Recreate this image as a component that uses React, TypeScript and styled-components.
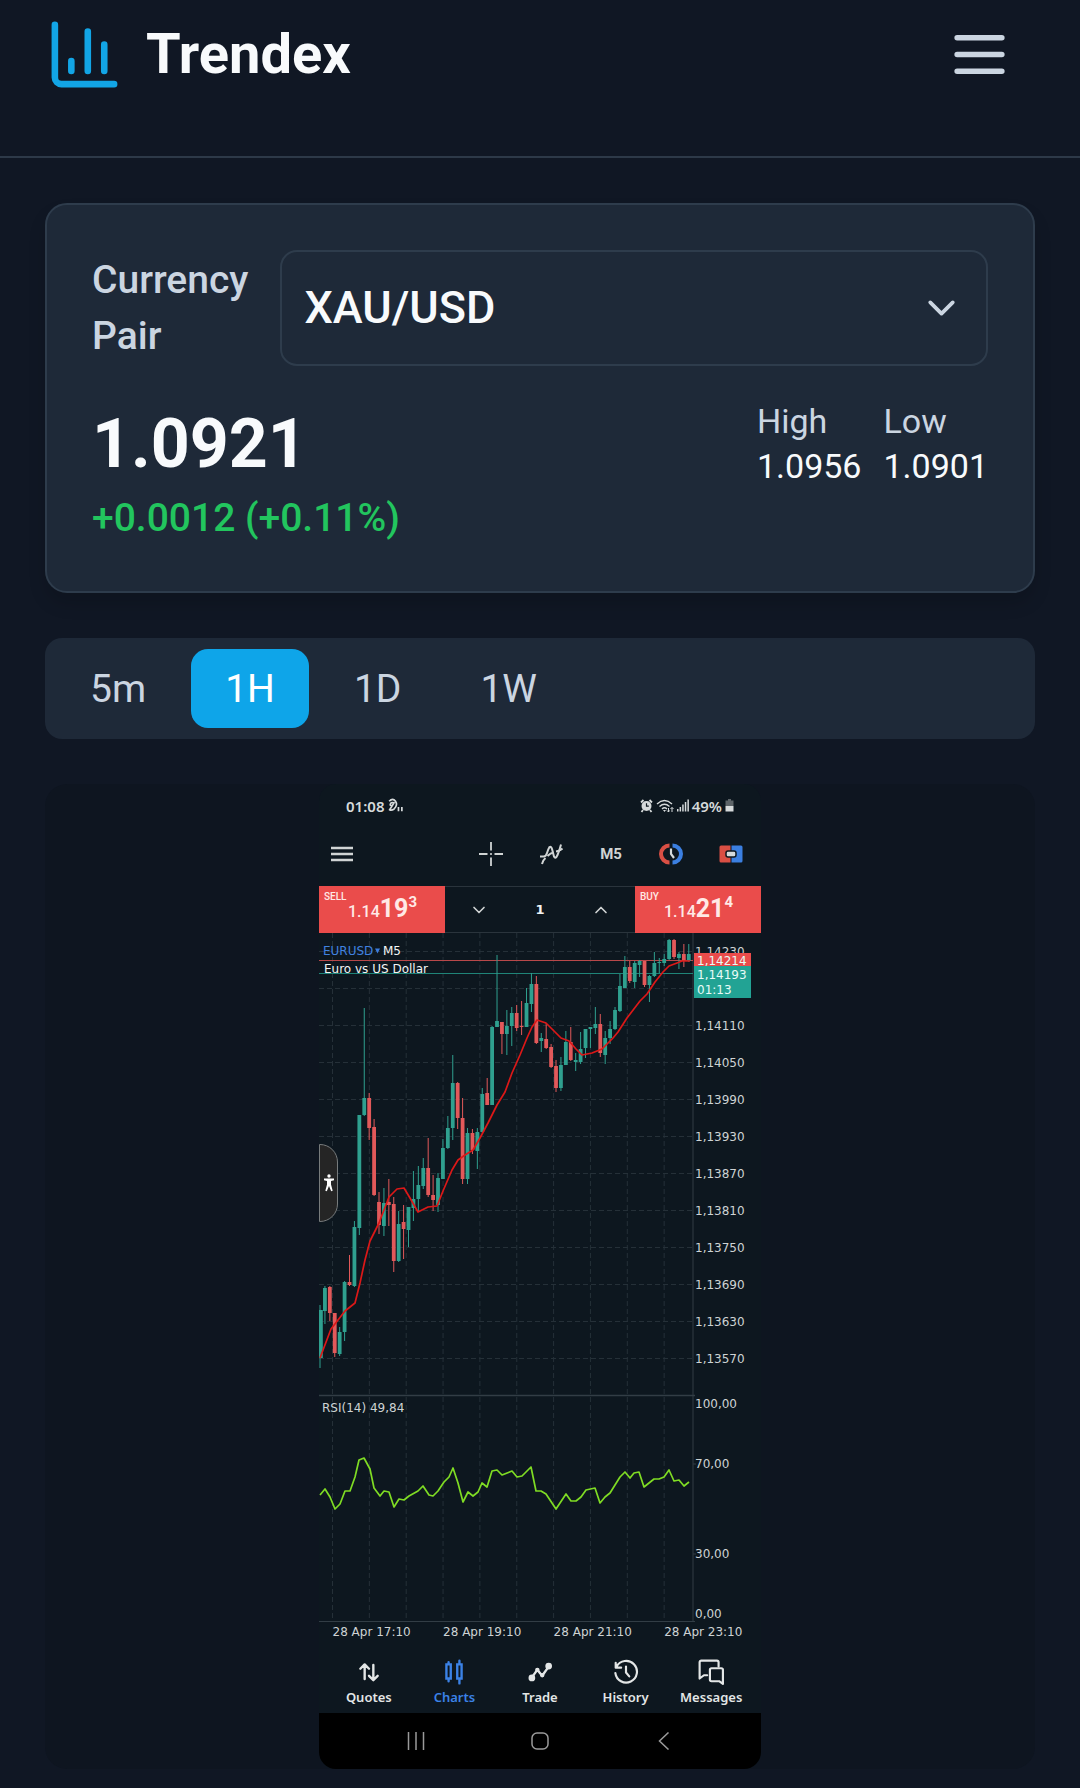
import React, { useState } from "react";
import styled, { createGlobalStyle } from "styled-components";

const GlobalStyle = createGlobalStyle`
  *, *::before, *::after { box-sizing: border-box; }
  body {
    margin: 0;
    background: #101724;
    color: #f8fafc;
    font-family: Roboto, "Liberation Sans", sans-serif;
  }
  button, select { font: inherit; color: inherit; }
  svg { display: block; flex: none; }
`;

const Page = styled.div`
  min-height: 100vh;
`;

const Header = styled.header`
  display: flex;
  align-items: flex-start;
  justify-content: space-between;
  height: 158px;
  padding: 15px 45px 0;
  border-bottom: 2px solid #2d3948;
`;

const Brand = styled.a`
  display: flex;
  align-items: center;
  gap: 22px;
  color: #f8fafc;
  font-size: 56px;
  font-weight: 700;
  line-height: 79px;
  text-decoration: none;
`;

const MenuButton = styled.button`
  display: grid;
  place-items: center;
  width: 112px;
  height: 79px;
  padding: 0;
  border: 0;
  background: none;
  color: #cbd5e1;
`;

const Main = styled.main`
  display: flex;
  flex-direction: column;
  gap: 45px;
  padding: 45px 45px 19px;
`;

const QuoteCard = styled.section`
  display: flex;
  flex-direction: column;
  gap: 33px;
  padding: 45px;
  border: 2px solid #2e3c4c;
  border-radius: 22px;
  background: #1e2938;
  box-shadow: 0 11px 17px rgba(0, 0, 0, 0.14);
`;

const PairRow = styled.div`
  display: flex;
  align-items: center;
  gap: 32px;
`;

const PairLabel = styled.label`
  width: min-content;
  color: #cbd5e1;
  font-size: 39px;
  font-weight: 500;
  line-height: 56px;
`;

const SelectBox = styled.div`
  position: relative;
  flex: 1;
  color: #cbd5e1;

  svg {
    position: absolute;
    top: 50%;
    right: 24px;
    transform: translateY(-50%);
    pointer-events: none;
  }
`;

const Select = styled.select`
  display: block;
  width: 100%;
  height: 116px;
  padding: 0 80px 2px 22px;
  appearance: none;
  border: 2px solid #2e3c4c;
  border-radius: 17px;
  background: #1e2938;
  color: #f8fafc;
  font-size: 45px;
  font-weight: 500;
`;

const PriceRow = styled.div`
  display: flex;
  align-items: flex-start;
  justify-content: space-between;
`;

const Price = styled.div`
  font-size: 68px;
  font-weight: 700;
  line-height: 91px;
`;

const Change = styled.div`
  color: #22c55e;
  font-size: 39px;
  font-weight: 500;
  line-height: 56px;
`;

const Range = styled.dl`
  display: flex;
  gap: 22px;
  margin: 0;
  font-size: 34px;
  line-height: 45px;

  dt { color: #cbd5e1; }
  dd { margin: 0; }
`;

const Timeframes = styled.div`
  display: flex;
  gap: 11px;
  padding: 11px;
  border-radius: 17px;
  background: #1e2938;
`;

const Timeframe = styled.button<{ $active: boolean }>`
  height: 79px;
  padding: 0 34px;
  border: 0;
  border-radius: 17px;
  background: ${(p) => (p.$active ? "#0ea5e9" : "transparent")};
  color: ${(p) => (p.$active ? "#ffffff" : "#cbd5e1")};
  font-size: 39px;
  line-height: 56px;
`;

const ChartPanel = styled.section`
  display: flex;
  justify-content: center;
  border-radius: 22px;
  background: #0e1520;
`;

const Phone = styled.div`
  display: flex;
  flex-direction: column;
  width: 442px;
  overflow: hidden;
  border-radius: 17px;
  background: #0d171f;
  color: #e6e9ea;
`;

const StatusBar = styled.div`
  display: flex;
  align-items: center;
  justify-content: space-between;
  height: 43px;
  padding: 0 27px;
  color: #d6dadb;
  font-family: "Noto Sans", sans-serif;
  font-size: 15px;
  font-weight: 600;
`;

const StatusGroup = styled.div`
  display: flex;
  align-items: center;
  gap: 3px;
`;

const Toolbar = styled.div`
  display: flex;
  justify-content: space-between;
  height: 59px;
  padding: 0 0 6px 12px;
`;

const ToolGroup = styled.div`
  display: grid;
  grid-template-columns: repeat(5, 60px);
`;

const Tool = styled.button`
  display: grid;
  place-items: center;
  padding: 0;
  border: 0;
  background: none;
  color: #d0d4d4;
  font-size: 15px;
  font-weight: 700;
`;

const TradeBar = styled.div`
  display: grid;
  grid-template: 47px / 126px 1fr 126px;
`;

const TradeButton = styled.button`
  display: flex;
  align-items: flex-start;
  gap: 2px;
  padding: 5px;
  border: 0;
  background: #ea4c4b;
  color: #ffe9e6;
  text-align: left;
`;

const TradeSide = styled.span`
  width: 22px;
  font-size: 10px;
  font-weight: 500;
  line-height: 11px;
`;

const TradePrice = styled.span`
  display: flex;
  align-items: baseline;
  font-size: 16px;
  font-weight: 500;
  line-height: 35px;

  b { font-size: 25px; font-weight: 700; }
  sup { align-self: flex-start; font-size: 15px; font-weight: 700; line-height: 22px; }
`;

const Volume = styled.div`
  display: grid;
  grid-template-columns: repeat(3, 61px);
  justify-content: center;
  align-items: center;
  border-top: 1px solid #2a343c;
  border-bottom: 1px solid #2a343c;
  color: #f1f3f3;
  font-family: "DejaVu Sans", sans-serif;
  font-size: 13px;
  font-weight: 700;
  text-align: center;
`;

const ChartArea = styled.div`
  position: relative;

  text {
    font-family: "DejaVu Sans", sans-serif;
    font-size: 12px;
  }
`;

const AccessTab = styled.button`
  position: absolute;
  top: 211px;
  left: 0;
  display: grid;
  place-items: center;
  width: 19px;
  height: 78px;
  padding: 0;
  border: 1px solid #777b7c;
  border-radius: 0 18px 18px 0;
  background: #252525;
  color: #fff;
`;

const AppNav = styled.nav`
  display: grid;
  grid-template-columns: repeat(5, 1fr);
  height: 68px;
  padding: 14px 7px 0;
`;

const AppLink = styled.a<{ $active?: boolean }>`
  display: flex;
  flex-direction: column;
  align-items: center;
  gap: 2px;
  color: ${(p) => (p.$active ? "#3b82e6" : "#e3e6e6")};
  font-family: "Noto Sans", sans-serif;
  font-size: 13px;
  font-weight: 600;
  line-height: 20px;
  text-decoration: none;
`;

const SystemNav = styled.div`
  display: grid;
  grid-template-columns: repeat(3, 124px);
  justify-content: center;
  height: 56px;
  background: #000;
`;

type Candle = [up: number, high: number, top: number, bottom: number, low: number];

const candles: Candle[] = [
  [1, 372, 377, 425, 435], [1, 353, 355, 378, 391], [0, 353, 354, 380, 388], [0, 380, 380, 420, 424],
  [1, 394, 399, 421, 423], [1, 348, 349, 399, 408], [0, 322, 349, 352, 353], [1, 288, 294, 353, 354],
  [1, 182, 182, 295, 302], [1, 75, 165, 182, 183], [0, 160, 165, 195, 207], [0, 186, 194, 262, 263],
  [0, 259, 269, 292, 301], [1, 255, 270, 293, 303], [0, 246, 269, 272, 293], [0, 264, 271, 328, 339],
  [1, 278, 291, 328, 329], [0, 272, 289, 296, 326], [1, 274, 274, 297, 314], [1, 238, 266, 275, 288],
  [1, 233, 252, 266, 279], [1, 225, 235, 253, 256], [0, 205, 235, 262, 264], [0, 242, 262, 267, 278],
  [1, 240, 245, 272, 279], [1, 206, 215, 246, 246], [1, 183, 195, 215, 216], [1, 122, 150, 195, 207],
  [0, 149, 150, 185, 196], [0, 165, 185, 246, 251], [1, 195, 200, 246, 251], [0, 196, 200, 217, 221],
  [1, 195, 199, 218, 236], [1, 155, 161, 199, 200], [0, 145, 160, 172, 172], [1, 93, 94, 172, 172],
  [1, 22, 88, 94, 94], [0, 89, 89, 101, 121], [1, 77, 93, 101, 122], [1, 74, 80, 93, 113],
  [0, 72, 80, 95, 98], [0, 68, 93, 94, 102], [1, 55, 70, 94, 94], [1, 40, 51, 71, 79],
  [0, 43, 51, 110, 111], [1, 100, 105, 108, 119], [0, 90, 106, 115, 116], [0, 111, 114, 134, 135],
  [0, 127, 133, 155, 159], [1, 124, 132, 155, 158], [1, 98, 109, 132, 132], [0, 94, 109, 127, 128],
  [1, 120, 127, 129, 138], [1, 99, 116, 129, 131], [1, 96, 96, 115, 125], [1, 94, 94, 96, 115],
  [1, 74, 91, 95, 101], [0, 81, 91, 120, 124], [1, 98, 105, 122, 131], [1, 88, 96, 105, 111],
  [1, 74, 77, 96, 97], [1, 41, 53, 78, 79], [1, 23, 34, 55, 55], [0, 28, 34, 48, 50],
  [1, 28, 30, 49, 55], [1, 27, 28, 32, 44], [0, 28, 28, 52, 54], [1, 42, 43, 52, 69],
  [1, 19, 30, 43, 44], [1, 25, 29, 30, 40], [1, 21, 26, 30, 33], [1, 6, 7, 26, 27],
  [0, 6, 7, 24, 26], [1, 19, 21, 25, 36], [0, 11, 21, 28, 34], [1, 11, 21, 28, 29],
];

const average =
  "1,425 12,396 26,378 36,370 41,350 46,327 51,308 60,290 70,264 78,256 85,255 91,265 99,279 109,274 118,273 " +
  "124,258 133,237 139,227 146,222 154,217 161,205 169,190 178,172 186,159 193,140 201,122 208,105 213,94 218,87 " +
  "227,90 235,98 242,105 250,108 257,116 263,122 273,120 283,116 294,105 299,99 308,85 321,68 328,61 336,49 344,39 " +
  "350,33 358,30 363,28 371,28";

const rsi =
  "1,562 6,556 11,564 16,576 21,571 26,558 31,558 36,544 40,527 45,525 51,536 55,555 61,563 65,558 70,559 75,574 " +
  "80,566 85,567 90,563 99,558 104,553 110,562 114,563 119,558 125,549 130,544 134,535 139,550 144,569 149,559 " +
  "154,563 159,559 163,550 168,554 173,538 178,537 183,542 193,538 198,544 203,543 212,534 217,558 222,558 227,561 " +
  "237,576 247,561 252,568 257,568 262,564 267,557 276,555 281,570 286,564 291,560 301,544 306,539 311,545 315,540 " +
  "320,539 325,554 330,550 335,546 340,546 345,544 350,537 355,548 360,547 365,553 370,549";

const prices = [
  "1,14230", "", "1,14110", "1,14050", "1,13990", "1,13930", "1,13870", "1,13810", "1,13750", "1,13690", "1,13630", "1,13570",
];
const rsiLevels = [
  { label: "100,00", y: 471 },
  { label: "70,00", y: 531 },
  { label: "30,00", y: 621 },
  { label: "0,00", y: 681 },
];
const times = ["28 Apr 17:10", "28 Apr 19:10", "28 Apr 21:10", "28 Apr 23:10"];

const UP = "#2fa08f";
const DOWN = "#e2595a";
const columnX = (k: number) => 13.5 + k * 36.85;
const rowY = (k: number) => 18.5 + k * 37;

function CandleChart() {
  return (
    <svg width="100%" viewBox="0 0 442 712" role="img" aria-label="EURUSD M5 candlestick chart with RSI">
      <g stroke="#253038" strokeWidth="1" strokeDasharray="5 3">
        {Array.from({ length: 10 }, (_, k) => (
          <line key={k} x1={columnX(k)} x2={columnX(k)} y1="0" y2="688" />
        ))}
        {prices.map((_, k) => (
          <line key={k} x1="0" x2="374" y1={rowY(k)} y2={rowY(k)} />
        ))}
      </g>
      <g stroke="#323d45" strokeWidth="1">
        <line x1="374" x2="374" y1="0" y2="688" />
        <line x1="0" x2="376" y1="462.5" y2="462.5" strokeWidth="1.4" />
        <line x1="0" x2="376" y1="688.5" y2="688.5" />
        <line x1="374" x2="377" y1="531" y2="531" />
        <line x1="374" x2="377" y1="621" y2="621" />
      </g>
      <line x1="0" x2="374" y1="27.5" y2="27.5" stroke="#b8484a" />
      <line x1="0" x2="374" y1="40.5" y2="40.5" stroke="#1f8478" />
      {candles.map(([up, high, top, bottom, low], i) => {
        const x = 1 + i * 4.917;
        return (
          <g key={i} fill={up ? UP : DOWN}>
            <rect x={x - 0.5} y={high} width="1" height={low - high} />
            <rect x={Math.max(0, x - 1.9)} y={top} width="3.8" height={Math.max(1, bottom - top)} />
          </g>
        );
      })}
      <polyline points={average} fill="none" stroke="#dc1818" strokeWidth="1.7" strokeLinejoin="round" />
      <polyline points={rsi} fill="none" stroke="#7fdc24" strokeWidth="1.7" strokeLinejoin="round" />
      <text x="4" y="22" fill="#4183e0">EURUSD</text>
      <path d="M56 15.500h5l-2.500 5z" fill="#3b7dde" />
      <text x="64" y="22" fill="#f3f5f5">M5</text>
      <text x="5" y="40" fill="#f3f5f5">Euro vs US Dollar</text>
      <g fill="#ced3d4">
        {prices.map((p, k) => p && <text key={p} x="376" y={rowY(k) + 4}>{p}</text>)}
        {rsiLevels.map((l) => <text key={l.label} x="376" y={l.y + 4}>{l.label}</text>)}
        <text x="3" y="479">RSI(14) 49,84</text>
        {times.map((t, k) => <text key={t} x={columnX(k * 3)} y="703">{t}</text>)}
      </g>
      <rect x="375" y="20" width="57" height="14" fill="#ea4c4b" />
      <rect x="375" y="33" width="57" height="32" fill="#22a394" />
      <g fill="#e8fbf7">
        <text x="378" y="32">1,14214</text>
        <text x="378" y="46">1,14193</text>
        <text x="378" y="61">01:13</text>
      </g>
    </svg>
  );
}

type StrokeIconProps = { size: number; width?: number; children: React.ReactNode };

function StrokeIcon({ size, width = 2, children }: StrokeIconProps) {
  return (
    <svg
      width={size}
      height={size}
      viewBox="0 0 24 24"
      fill="none"
      stroke="currentColor"
      strokeWidth={width}
      strokeLinecap="round"
      strokeLinejoin="round"
      aria-hidden="true"
    >
      {children}
    </svg>
  );
}

function StatusIcons() {
  return (
    <>
      <svg width="13" height="14" viewBox="0 0 13 14" aria-hidden="true">
        <circle cx="6.500" cy="7" r="5" fill="currentColor" />
        <path d="M1 3.500 3.500 1M12 3.500 9.500 1M3 11 1.500 13M10 11l1.500 2" stroke="currentColor" strokeWidth="1.800" />
        <path d="M6.500 4.300V7.200h2.300" stroke="#0d171f" strokeWidth="1.200" fill="none" />
      </svg>
      <svg width="18" height="14" viewBox="0 0 18 14" fill="none" stroke="currentColor" strokeWidth="1.400" aria-hidden="true">
        <path d="M1 5Q8.500-2 16 5M3.500 7.500q5-4.500 10 0M6 10q2.500-2.300 5 0" />
        <path d="m7 11 1.500 2 1.500-2z" fill="currentColor" stroke="none" />
        <path d="M12.500 9v4m-1.500-1.500 1.500 1.500 1-1.500M16 13V8.500m-1.500 1.500L16 8.500l1.500 1.500" strokeWidth="1" />
      </svg>
      <svg width="12" height="13" viewBox="0 0 12 13" fill="currentColor" aria-hidden="true">
        <path d="M0 10h1.500v2.500H0zM2.600 8h1.500v4.500H2.600zM5.200 5.500h1.500v7H5.200zM7.800 3h1.500v9.500H7.800zM10.400.5h1.500v12h-1.500z" />
      </svg>
    </>
  );
}

function TradeTicket({ side, base, pips, point }: { side: string; base: string; pips: string; point: string }) {
  return (
    <TradeButton type="button">
      <TradeSide>{side}</TradeSide>
      <TradePrice>
        {base}
        <b>{pips}</b>
        <sup>{point}</sup>
      </TradePrice>
    </TradeButton>
  );
}

function PhoneScreen() {
  return (
    <Phone>
      <StatusBar>
        <StatusGroup>
          <span>01:08</span>
          <svg width="17" height="15" viewBox="0 0 16 14" fill="none" stroke="currentColor" strokeWidth="1.600" aria-hidden="true">
            <path d="M2 3q3.500-3.500 6 0t-1.500 7.500Q4 12 2.500 11l4-6.500q-3-1-3.500 2l2 1.500" />
            <path d="M10.800 8.500V12.500M14 8.500V12.500" />
          </svg>
        </StatusGroup>
        <StatusGroup>
          <StatusIcons />
          <span>49%</span>
          <svg width="9" height="13" viewBox="0 0 9 13" aria-hidden="true">
            <path d="M3 0h3v1.500h2.500V7h-8V1.500H3z" fill="#5d6468" />
            <path d="M.5 7h8v5.500h-8z" fill="currentColor" />
          </svg>
        </StatusGroup>
      </StatusBar>

      <Toolbar>
        <Tool type="button" aria-label="Menu">
          <svg width="22" height="16" viewBox="0 0 22 16" stroke="currentColor" strokeWidth="2.500" aria-hidden="true">
            <path d="M0 2h22M0 8h22M0 14h22" />
          </svg>
        </Tool>
        <ToolGroup>
          <Tool type="button" aria-label="Crosshair">
            <svg width="24" height="24" viewBox="0 0 24 24" stroke="currentColor" strokeWidth="1.800" aria-hidden="true">
              <path d="M12 0v8.500M12 15.500v8.500M0 12h8.500M15.500 12h8.500M11.200 12h1.600" />
            </svg>
          </Tool>
          <Tool type="button" aria-label="Indicators">
            <svg width="26" height="22" viewBox="0 0 26 22" fill="none" stroke="currentColor" strokeWidth="2" aria-hidden="true">
              <path d="M2 13.500h3.500Q8 13.500 9 10t2.500-6q1.800-1 2.800 3t1.700 6.500q1.500 3 3.500-1.500T23 1.500" />
              <path d="M4 21q1-4 3.500-6M9.500 13q3-3 6-3.500M18 8.500q4-.5 6.500-3" />
            </svg>
          </Tool>
          <Tool type="button">M5</Tool>
          <Tool type="button" aria-label="New order">
            <svg width="24" height="22" viewBox="0 0 24 22" fill="none" aria-hidden="true">
              <path d="M10.500 2.500a8.500 8.500 0 0 0 0 17" stroke="#d94f44" strokeWidth="4" />
              <path d="M13.500 2.500a8.500 8.500 0 0 1 0 17" stroke="#3b7fe0" strokeWidth="4" />
              <path d="M12 5.500v5.500l3 4" stroke="#d5dadb" strokeWidth="2.200" />
            </svg>
          </Tool>
          <Tool type="button" aria-label="One click trading">
            <svg width="24" height="18" viewBox="0 0 24 18" aria-hidden="true">
              <path d="M2 .5h9.500v17H2a1.500 1.500 0 0 1-1.500-1.500V2A1.500 1.500 0 0 1 2 .5z" fill="#d94f44" />
              <path d="M12.500.5H22A1.500 1.500 0 0 1 23.500 2v14a1.500 1.500 0 0 1-1.500 1.500h-9.500z" fill="#3b7fe0" />
              <rect x="7" y="6" width="10" height="6" rx="2" fill="#d5dadb" stroke="#0d171f" strokeWidth="1.500" />
            </svg>
          </Tool>
        </ToolGroup>
      </Toolbar>

      <TradeBar>
        <TradeTicket side="SELL" base="1.14" pips="19" point="3" />
        <Volume>
          <Tool type="button" aria-label="Decrease volume">
            <StrokeIcon size={20}><path d="m6 9 6 6 6-6" /></StrokeIcon>
          </Tool>
          <span>1</span>
          <Tool type="button" aria-label="Increase volume">
            <StrokeIcon size={20}><path d="m6 15 6-6 6 6" /></StrokeIcon>
          </Tool>
        </Volume>
        <TradeTicket side="BUY" base="1.14" pips="21" point="4" />
      </TradeBar>

      <ChartArea>
        <CandleChart />
        <AccessTab type="button" aria-label="Accessibility">
          <svg width="12" height="18" viewBox="0 0 12 18" fill="currentColor" aria-hidden="true">
            <circle cx="6" cy="2" r="1.700" />
            <path d="M1 4.500h10v1.700L8 7v3.500l1.700 6.200-1.500.5L6 12l-2.200 5.200-1.500-.5L4 10.500V7L1 6.200z" />
          </svg>
        </AccessTab>
      </ChartArea>

      <AppNav>
        <AppLink href="#quotes">
          <StrokeIcon size={26} width={2.2}>
            <path d="M8 18.500V5.500M4 9 8 5l4 4M16 5.500V19M12 15.500l4 4 4-4" />
          </StrokeIcon>
          Quotes
        </AppLink>
        <AppLink href="#charts" $active>
          <StrokeIcon size={26} width={2.2}>
            <path d="M5 5h4v13H5zM15 5h4v13h-4zM7 3v2M7 18v2.500M17 1.500V5M17 18v4.500" strokeLinejoin="miter" />
          </StrokeIcon>
          Charts
        </AppLink>
        <AppLink href="#trade">
          <StrokeIcon size={26} width={2.2}>
            <path d="m4.500 17 5-7 4.500 5.500L20 7" />
            <circle cx="4.500" cy="17.500" r="2" fill="currentColor" />
            <circle cx="20" cy="6.500" r="2" fill="currentColor" />
            <path d="M9.500 10h.1M14 15h.1" strokeWidth="4" />
          </StrokeIcon>
          Trade
        </AppLink>
        <AppLink href="#history">
          <StrokeIcon size={26}>
            <path d="M3.300 7A10 10 0 1 1 2.200 13M2.500 3.500V8h5M12 7v5.500l3 3.500" />
          </StrokeIcon>
          History
        </AppLink>
        <AppLink href="#messages">
          <StrokeIcon size={26}>
            <path d="M8.500 15H5.500L1.500 18V3A1.500 1.500 0 0 1 3 1.500h14.500A1.500 1.500 0 0 1 19 3v4" />
            <path d="M12.500 8.500h9A1.500 1.500 0 0 1 23 10v13L19.500 20.500h-7A1.500 1.500 0 0 1 11 19v-9a1.500 1.500 0 0 1 1.500-1.500z" />
          </StrokeIcon>
          Messages
        </AppLink>
      </AppNav>

      <SystemNav>
        <Tool type="button" aria-label="Recent apps">
          <svg width="18" height="18" viewBox="0 0 18 18" stroke="#9a9a9a" strokeWidth="1.500" aria-hidden="true">
            <path d="M1.500 0v18M9 0v18M16.500 0v18" />
          </svg>
        </Tool>
        <Tool type="button" aria-label="Home">
          <svg width="18" height="18" viewBox="0 0 18 18" fill="none" stroke="#9a9a9a" strokeWidth="1.500" aria-hidden="true">
            <rect x="1" y="1" width="16" height="16" rx="5" />
          </svg>
        </Tool>
        <Tool type="button" aria-label="Back">
          <svg width="12" height="18" viewBox="0 0 12 18" fill="none" stroke="#9a9a9a" strokeWidth="1.500" aria-hidden="true">
            <path d="M10.500.5 1.500 9l9 8.500" />
          </svg>
        </Tool>
      </SystemNav>
    </Phone>
  );
}

const frames = ["5m", "1H", "1D", "1W"];
const pairs = ["XAU/USD", "EUR/USD", "GBP/USD", "USD/JPY"];

export default function App() {
  const [frame, setFrame] = useState("1H");
  const [pair, setPair] = useState("XAU/USD");

  return (
    <Page>
      <GlobalStyle />
      <Header>
        <Brand href="#home">
          <StrokeIconBrand />
          Trendex
        </Brand>
        <MenuButton type="button" aria-label="Open menu">
          <StrokeIcon size={67}><path d="M4 6h16M4 12h16M4 18h16" /></StrokeIcon>
        </MenuButton>
      </Header>

      <Main>
        <QuoteCard>
          <PairRow>
            <PairLabel htmlFor="pair">Currency Pair</PairLabel>
            <SelectBox>
              <Select id="pair" value={pair} onChange={(e) => setPair(e.target.value)}>
                {pairs.map((p) => <option key={p}>{p}</option>)}
              </Select>
              <StrokeIcon size={45}><path d="m6 9 6 6 6-6" /></StrokeIcon>
            </SelectBox>
          </PairRow>
          <PriceRow>
            <div>
              <Price>1.0921</Price>
              <Change>+0.0012 (+0.11%)</Change>
            </div>
            <Range>
              <div>
                <dt>High</dt>
                <dd>1.0956</dd>
              </div>
              <div>
                <dt>Low</dt>
                <dd>1.0901</dd>
              </div>
            </Range>
          </PriceRow>
        </QuoteCard>

        <Timeframes>
          {frames.map((f) => (
            <Timeframe key={f} type="button" $active={f === frame} aria-pressed={f === frame} onClick={() => setFrame(f)}>
              {f}
            </Timeframe>
          ))}
        </Timeframes>

        <ChartPanel>
          <PhoneScreen />
        </ChartPanel>
      </Main>
    </Page>
  );
}

function StrokeIconBrand() {
  return (
    <svg
      width="79"
      height="79"
      viewBox="0 0 24 24"
      fill="none"
      stroke="#12a5e6"
      strokeWidth="2"
      strokeLinecap="round"
      strokeLinejoin="round"
      aria-hidden="true"
    >
      <path d="M3 3v16a2 2 0 0 0 2 2h16M18 17V9M13 17V5M8 17v-3" />
    </svg>
  );
}
